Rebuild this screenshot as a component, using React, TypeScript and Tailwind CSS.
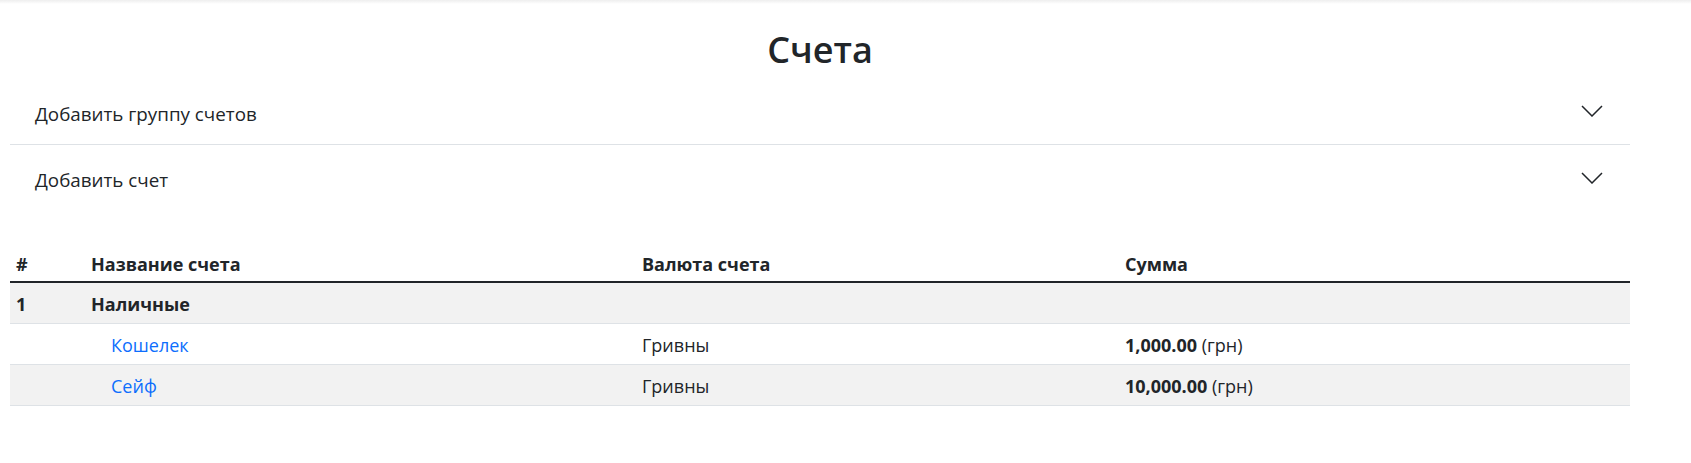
import React from "react";

type Row = {
  num?: string;
  name: string;
  group?: boolean;
  currency?: string;
  amount?: string;
};

const rows: Row[] = [
  { num: "1", name: "Наличные", group: true },
  { name: "Кошелек", currency: "Гривны", amount: "1,000.00" },
  { name: "Сейф", currency: "Гривны", amount: "10,000.00" },
];

function Chevron() {
  return (
    <svg width="22" height="12" viewBox="0 0 22 12" fill="none" className="mb-[6px]">
      <polyline points="1,1 11,11 21,1" stroke="#212529" strokeWidth="1.5" />
    </svg>
  );
}

function AccordionItem({ title, last }: { title: string; last?: boolean }) {
  return (
    <button
      type="button"
      className={
        "flex w-full items-center justify-between pl-[25px] pr-[27px] text-left text-[18.8px] text-[#212529] " +
        (last ? "h-[71px]" : "h-[61px] border-b border-[#dee2e6]")
      }
    >
      <span>{title}</span>
      <Chevron />
    </button>
  );
}

export default function App() {
  return (
    <div className="min-h-screen bg-white font-['Open_Sans',sans-serif] text-[#212529]">
      <div className="h-[4px] bg-gradient-to-b from-[#eeeeee] to-white" />

      <main className="ml-[10px] w-[1620px]">
        <h1 className="flex h-[80px] items-center justify-center pt-[12px] text-[36px] font-semibold leading-none">
          Счета
        </h1>

        <AccordionItem title="Добавить группу счетов" />
        <AccordionItem title="Добавить счет" last />

        <div className="mt-[25px] text-[18px]">
          <div className="grid h-[42px] grid-cols-[75px_551px_483px_511px] items-end border-b-2 border-[#212529] pb-[5px] font-bold leading-[24px]">
            <div className="px-[6px]">#</div>
            <div className="px-[6px]">Название счета</div>
            <div className="px-[6px]">Валюта счета</div>
            <div className="px-[6px]">Сумма</div>
          </div>

          {rows.map((r, i) => (
            <div
              key={r.name}
              className={
                "grid h-[41px] grid-cols-[75px_551px_483px_511px] items-center border-b border-[#dee2e6] pt-[3px] " +
                (i % 2 === 0 ? "bg-[#f2f2f2]" : "bg-white")
              }
            >
              <div className="px-[6px] font-bold">{r.num}</div>
              {r.group ? (
                <div className="px-[6px] font-bold">{r.name}</div>
              ) : (
                <div className="pl-[26px]">
                  <a href="#" className="text-[#0d6efd]">
                    {r.name}
                  </a>
                </div>
              )}
              <div className="px-[6px]">{r.currency}</div>
              <div className="px-[6px]">
                {r.amount && (
                  <>
                    <span className="font-bold">{r.amount}</span> (грн)
                  </>
                )}
              </div>
            </div>
          ))}
        </div>
      </main>
    </div>
  );
}
